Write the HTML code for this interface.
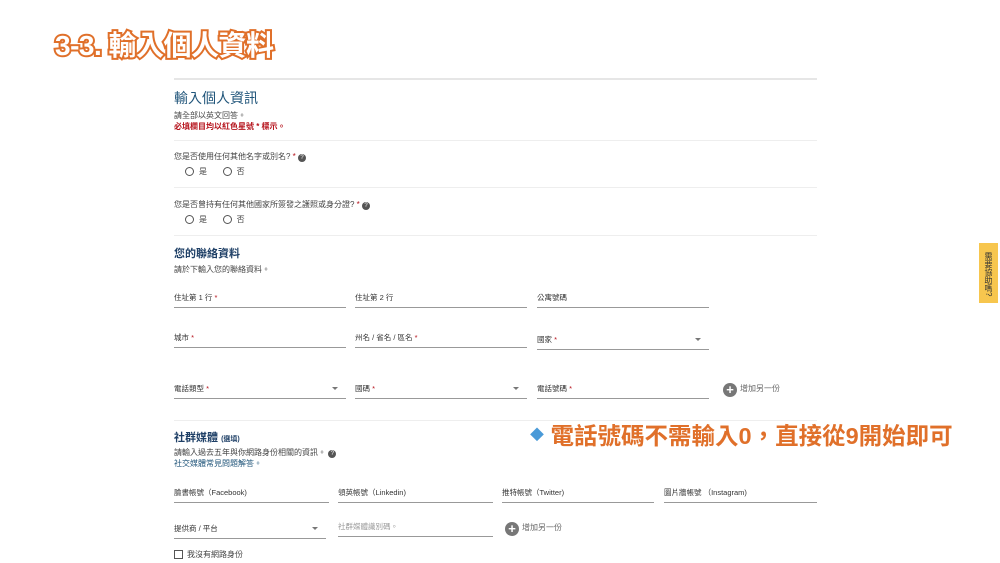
<!DOCTYPE html>
<html><head><meta charset="utf-8"><style>
*{margin:0;padding:0;box-sizing:border-box}
body{width:1000px;height:563px;background:#fff;position:relative;overflow:hidden;font-family:"Liberation Sans","Noto Sans CJK TC",sans-serif;color:#333}
.a{position:absolute;white-space:nowrap}
.s{font-size:8px;color:#444}
.r{color:#b5121b}
.hr{position:absolute;height:1px;background:#eee}
.f{position:absolute;border-bottom:1px solid #999;height:20px;font-size:7.5px;color:#333;padding-top:4px}
.f i{font-style:normal;color:#b5121b}
.dd:after{content:"";position:absolute;right:8px;top:8px;border:3px solid transparent;border-top:3px solid #777}
.rad{display:inline-block;width:9px;height:9px;border:1px solid #555;border-radius:50%;vertical-align:-2px;margin-right:5px}
.q{display:inline-block;width:8px;height:8px;border-radius:50%;background:#555;color:#fff;font-size:6px;text-align:center;line-height:8px;vertical-align:0}
.plus{display:inline-block;width:14px;height:14px;border-radius:50%;background:#777;color:#fff;font-size:13px;font-weight:bold;text-align:center;line-height:14px;vertical-align:-3px;margin-right:3px}
</style></head><body>
<div class="a" style="left:55px;top:24px;font-size:28px;font-weight:bold;color:#fff;-webkit-text-stroke:4px #e0702a;paint-order:stroke fill;letter-spacing:-0.5px">3-3. 輸入個人資料</div>
<div class="hr" style="left:174px;top:78px;width:643px;height:2px;background:#e6e6e6"></div>
<div class="a" style="left:174px;top:88px;font-size:14px;color:#20557a">輸入個人資訊</div>
<div class="a s" style="left:174px;top:110px">請全部以英文回答。</div>
<div class="a s r" style="left:174px;top:121px;font-weight:bold">必填欄目均以紅色星號 * 標示。</div>
<div class="hr" style="left:174px;top:140px;width:643px"></div>
<div class="a s" style="left:174px;top:151px">您是否使用任何其他名字或別名? <span class="r">*</span> <span class="q">?</span></div>
<div class="a s" style="left:185px;top:166px"><span class="rad"></span>是 &nbsp;&nbsp;&nbsp;&nbsp;&nbsp;&nbsp;<span class="rad"></span>否</div>
<div class="hr" style="left:174px;top:187px;width:643px"></div>
<div class="a s" style="left:174px;top:199px">您是否曾持有任何其他國家所簽發之護照或身分證? <span class="r">*</span> <span class="q">?</span></div>
<div class="a s" style="left:185px;top:214px"><span class="rad"></span>是 &nbsp;&nbsp;&nbsp;&nbsp;&nbsp;&nbsp;<span class="rad"></span>否</div>
<div class="hr" style="left:174px;top:235px;width:643px"></div>
<div class="a" style="left:174px;top:245px;font-size:11px;font-weight:bold;color:#1e3f66">您的聯絡資料</div>
<div class="a s" style="left:174px;top:264px">請於下輸入您的聯絡資料。</div>
<div class="f" style="left:174px;top:288px;width:172px">住址第 1 行 <i>*</i></div>
<div class="f" style="left:355px;top:288px;width:172px">住址第 2 行</div>
<div class="f" style="left:537px;top:288px;width:172px">公寓號碼</div>
<div class="f" style="left:174px;top:328px;width:172px">城市 <i>*</i></div>
<div class="f" style="left:355px;top:328px;width:172px">州名 / 省名 / 區名 <i>*</i></div>
<div class="f dd" style="left:537px;top:330px;width:172px">國家 <i>*</i></div>
<div class="f dd" style="left:174px;top:379px;width:172px">電話類型 <i>*</i></div>
<div class="f dd" style="left:355px;top:379px;width:172px">國碼 <i>*</i></div>
<div class="f" style="left:537px;top:379px;width:172px">電話號碼 <i>*</i></div>
<div class="a s" style="left:723px;top:383px;color:#666"><span class="plus">+</span>增加另一份</div>
<div class="hr" style="left:174px;top:420px;width:643px"></div>
<div class="a" style="left:174px;top:429px;font-size:11px;font-weight:bold;color:#1e3f66">社群媒體 <span style="font-size:7px">(選填)</span></div>
<div class="a s" style="left:174px;top:447px">請輸入過去五年與你網路身份相關的資訊。 <span class="q">?</span></div>
<div class="a s" style="left:174px;top:458px;color:#20557a">社交媒體常見問題解答。</div>
<div class="a" style="left:530px;top:417px;font-size:23.5px;font-weight:bold;color:#e0702a"><span style="color:#4a9ad8;font-size:14px;vertical-align:4px">◆</span> 電話號碼不需輸入0，直接從9開始即可</div>
<div class="f" style="left:174px;top:483px;width:155px">臉書帳號（Facebook)</div>
<div class="f" style="left:338px;top:483px;width:155px">領英帳號（Linkedin)</div>
<div class="f" style="left:502px;top:483px;width:152px">推特帳號（Twitter)</div>
<div class="f" style="left:664px;top:483px;width:153px">圖片牆帳號 （Instagram)</div>
<div class="f dd" style="left:174px;top:519px;width:152px">提供商 / 平台</div>
<div class="f" style="left:338px;top:517px;width:155px;color:#999">社群媒體識別碼。</div>
<div class="a s" style="left:505px;top:522px;color:#666"><span class="plus">+</span>增加另一份</div>
<div class="a s" style="left:174px;top:549px"><span style="display:inline-block;width:9px;height:9px;border:1px solid #555;vertical-align:-2px;margin-right:4px"></span>我沒有網路身份</div>
<div class="a" style="left:979px;top:243px;width:19px;height:60px;background:#f7c64e;font-size:8px;color:#333;writing-mode:vertical-rl;text-align:center;line-height:19px;padding-top:3px">需要協助嗎?</div>
</body></html>
